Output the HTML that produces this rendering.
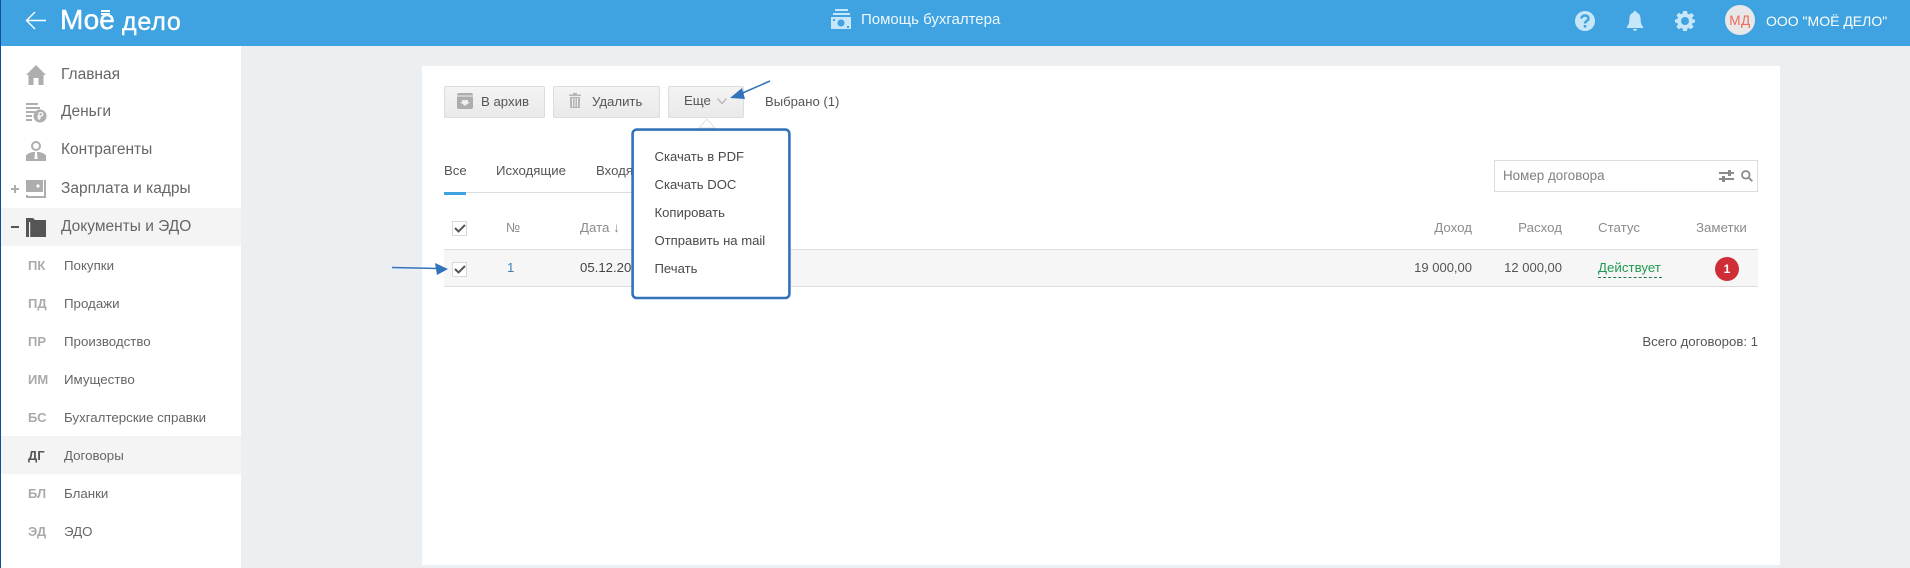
<!DOCTYPE html>
<html lang="ru"><head><meta charset="utf-8"><title>Договоры</title>
<style>
html,body{margin:0;padding:0;width:1910px;height:568px;overflow:hidden;background:#ebeff2}
body{position:relative;font-family:"Liberation Sans",sans-serif;font-size:13px;color:#555}
.a{position:absolute}
.t{position:absolute;white-space:nowrap;line-height:20px;height:20px}
.r{text-align:right}
.m{font-size:15.5px;color:#666;left:61px}
.s{font-size:13.3px;color:#666;left:64px}
.b{font-size:13px;font-weight:bold;color:#aaa;left:28px}
.h{color:#8c8c8c;font-size:13.3px}
.btn{position:absolute;top:86px;height:30px;border:1px solid #dcdcdc;border-radius:2px;background:linear-gradient(#f4f4f4,#e9e9e9)}
.cb{position:absolute;left:452px;width:13px;height:13px;border:1px solid #d8d8d8;background:#fff}
.pi{font-size:13.1px;color:#4a4a4a;left:654.500px}
svg{position:absolute;overflow:visible}
</style></head><body>
<!-- frame -->
<div class="a" style="left:1px;top:46px;width:240px;height:522px;background:#fff"></div>
<div class="a" style="left:0;top:0;width:1910px;height:46px;background:#3ea3e0"></div>
<div class="a" style="left:0;top:0;width:1px;height:568px;background:#0f4f9e"></div>
<div class="a" style="left:1px;top:208px;width:240px;height:38px;background:#f4f4f4"></div>
<div class="a" style="left:1px;top:436px;width:240px;height:38px;background:#f4f4f4"></div>
<div class="a" style="left:422px;top:66px;width:1358px;height:499px;background:#fff"></div>

<!-- header -->
<svg style="left:26px;top:12px" width="20" height="18" fill="none" stroke="#fff" stroke-width="1.400"><path d="M0 8.500H20M9 0L.5 8.500L9 17"/></svg>
<div class="t" style="left:60px;top:5px;height:30px;line-height:30px;font-size:28px;color:#fff;-webkit-text-stroke:.4px #fff">Моё</div>
<div class="a" style="left:95px;top:5px;width:22px;height:10px;background:#3ea3e0"></div>
<div class="a" style="left:101px;top:10px;width:9px;height:2px;background:#fff"></div>
<div class="a" style="left:101px;top:13px;width:9px;height:2px;background:#fff"></div>
<div class="t" style="left:122px;top:9px;height:26px;line-height:26px;font-size:25px;color:#fff;letter-spacing:.8px;-webkit-text-stroke:.4px #fff">дело</div>

<svg style="left:831px;top:9px" width="20" height="20" fill="#c8e6fa"><rect x="4" y="0" width="13" height="2"/><rect x="2" y="4" width="17" height="2"/><path fill-rule="evenodd" d="M0 8H20V20H0ZM10 10.500a3.500 3.500 0 1 0 .01 0ZM2 10v2h2v-2ZM16 17v2h2v-2Z"/></svg>
<div class="t" style="left:861px;top:10px;color:#eef8fe;font-size:15px">Помощь бухгалтера</div>

<svg style="left:1575px;top:11px" width="20" height="20"><circle cx="10" cy="10" r="10" fill="#c8e6fa"/><path d="M6.500 7.500C6.500 3.500 13.500 3.500 13.500 7.500C13.500 10 10 10 10 12.500" fill="none" stroke="#3ea3e0" stroke-width="2.400"/><rect x="8.700" y="14" width="2.600" height="2.600" fill="#3ea3e0"/></svg>
<svg style="left:1627px;top:11px" width="16" height="20" fill="#c8e6fa"><path d="M8 0C9.200 0 9.600.8 9.600 1.600C12.600 2.400 13.600 5 13.600 8C13.600 12 14.600 14 16 15.500V17H0V15.500C1.400 14 2.400 12 2.400 8C2.400 5 3.400 2.400 6.400 1.600C6.400 .8 6.800 0 8 0ZM6 18H10C10 20.500 6 20.500 6 18Z"/></svg>
<svg style="left:1675px;top:11px" width="20" height="20" fill="#c8e6fa"><path fill-rule="evenodd" d="M8 0H12L12.600 2.700L14.400 3.400L16.800 2L19 4.800L17 6.800L17.600 8.400L20 8.500V11.500L17.600 12L17 13.500L18.600 15.700L15.800 18.300L13.800 17L12.400 17.500L12 20H8L7.500 17.500L6 17L3.900 18.400L1.400 15.800L3 13.600L2.400 12L0 11.500V8.500L2.400 8L3 6.600L1.400 4.400L4 1.800L6.200 3.200L7.600 2.600ZM10 6A4 4 0 1 0 10.010 6Z"/></svg>
<div class="a" style="left:1725px;top:5px;width:30px;height:30px;border-radius:50%;background:#e8e8e8"></div>
<div class="t" style="left:1725px;top:11px;width:30px;text-align:center;color:#f0695a;font-size:13.5px;letter-spacing:.5px">МД</div>
<div class="t" style="left:1766px;top:11px;color:#fff;font-size:14px">ООО "МОЁ ДЕЛО"</div>

<!-- sidebar icons -->
<svg style="left:26px;top:65px" width="20" height="20" fill="#aeaeae"><path d="M10 0L20 10H17.500V20H12.500V13H7.500V20H2.500V10H0Z"/></svg>
<svg style="left:26px;top:103px" width="20" height="20" fill="#aeaeae"><path d="M0 0H12V2H0ZM0 4H14V6H0ZM0 8H9V10H0ZM0 12H6V14H0ZM0 16H6V18H0Z"/><circle cx="14" cy="13" r="6.500"/><path d="M13 9.500V17M11.500 13H15.500A1.700 1.700 0 0 0 15.500 9.700H13M11.500 15H15" fill="none" stroke="#fff" stroke-width="1.200"/></svg>
<svg style="left:26px;top:141px" width="20" height="20" fill="#aeaeae"><circle cx="10" cy="5" r="4" fill="none" stroke="#aeaeae" stroke-width="2"/><path d="M0 20V15C0 13 4 11.500 7 11H13C16 11.500 20 13 20 15V20Z"/><path d="M9 11H11L11.600 18H8.400Z" fill="#fff"/></svg>
<svg style="left:26px;top:180px" width="20" height="19" fill="#aeaeae"><path d="M0 0H17V12H0ZM18 0H20V18H0V15H2V16H18Z"/><circle cx="12" cy="6" r="1.600" fill="#fff"/></svg>
<div class="a" style="left:11px;top:188px;width:8px;height:2px;background:#aeaeae"></div>
<div class="a" style="left:14px;top:185px;width:2px;height:8px;background:#aeaeae"></div>
<svg style="left:26px;top:218px" width="20" height="19" fill="#555"><path d="M0 0H7L9 2H20V19H2V4H0ZM0 4H1V19H0Z"/><rect x="0" y="1" width="3" height="18" rx="1"/><rect x="3" y="4" width="1.200" height="15" fill="#f4f4f4"/></svg>
<div class="a" style="left:11px;top:226px;width:8px;height:2px;background:#555"></div>

<!-- sidebar text -->
<div class="t m" style="top:65px">Главная</div>
<div class="t m" style="top:102px">Деньги</div>
<div class="t m" style="top:140px">Контрагенты</div>
<div class="t m" style="top:179px">Зарплата и кадры</div>
<div class="t m" style="top:217px">Документы и ЭДО</div>
<div class="t b" style="top:256px">ПК</div><div class="t s" style="top:256px">Покупки</div>
<div class="t b" style="top:294px">ПД</div><div class="t s" style="top:294px">Продажи</div>
<div class="t b" style="top:332px">ПР</div><div class="t s" style="top:332px">Производство</div>
<div class="t b" style="top:370px">ИМ</div><div class="t s" style="top:370px">Имущество</div>
<div class="t b" style="top:408px">БС</div><div class="t s" style="top:408px">Бухгалтерские справки</div>
<div class="t b" style="top:446px;color:#555">ДГ</div><div class="t s" style="top:446px">Договоры</div>
<div class="t b" style="top:484px">БЛ</div><div class="t s" style="top:484px">Бланки</div>
<div class="t b" style="top:522px">ЭД</div><div class="t s" style="top:522px">ЭДО</div>

<!-- buttons -->
<div class="btn" style="left:444px;width:99px"></div>
<div class="btn" style="left:553px;width:105px"></div>
<div class="btn" style="left:668px;width:74px"></div>
<svg style="left:457px;top:93px" width="16" height="16"><rect width="16" height="16" rx="2" fill="#adadad"/><rect x="0" y="2.500" width="16" height="1" fill="#eee"/><path d="M5 7H11V9H13L8 13L3 9H5Z" fill="#eee"/></svg>
<div class="t" style="left:481px;top:92px;font-size:13.2px;color:#555">В архив</div>
<svg style="left:569px;top:93px" width="12" height="15" fill="#b5b5b5"><rect x="0" y="1.500" width="12" height="1.500"/><rect x="4" y="0" width="4" height="1.500"/><path fill-rule="evenodd" d="M1 4H11V15H1ZM3 5V14H4V5ZM5.500 5V14H6.500V5ZM8 5V14H9V5Z"/></svg>
<div class="t" style="left:592px;top:92px;font-size:13.2px;color:#555">Удалить</div>
<div class="t" style="left:684px;top:91px;font-size:13.2px;color:#555">Еще</div>
<svg style="left:717px;top:98px" width="10" height="6" fill="none" stroke="#b0b0b0" stroke-width="1.200"><path d="M.5 .5L5 5.500L9.500 .5"/></svg>
<div class="t" style="left:765px;top:92px;font-size:13.1px;color:#555">Выбрано (1)</div>

<!-- tabs -->
<div class="a" style="left:444px;top:192px;width:190px;height:1px;background:#ddd"></div>
<div class="a" style="left:444px;top:192px;width:22px;height:3px;background:#3ea3e0"></div>
<div class="t" style="left:444px;top:161px;font-size:13.2px;color:#555">Все</div>
<div class="t" style="left:496px;top:161px;font-size:13.2px;color:#555">Исходящие</div>
<div class="t" style="left:596px;top:161px;font-size:13.2px;color:#555">Входящие</div>

<!-- search -->
<div class="a" style="left:1494px;top:160px;width:262px;height:30px;border:1px solid #ddd"></div>
<div class="t" style="left:1503px;top:166px;font-size:13.4px;color:#808080">Номер договора</div>
<svg style="left:1719px;top:170px" width="15" height="12" fill="#8a8a8a"><rect y="2" width="15" height="2"/><rect y="8" width="15" height="2"/><rect x="9" y="0" width="3" height="6"/><rect x="3" y="6" width="3" height="6"/></svg>
<svg style="left:1741px;top:170px" width="12" height="12" fill="none" stroke="#8a8a8a" stroke-width="1.800"><circle cx="4.800" cy="4.800" r="3.800"/><path d="M7.500 7.500L11.300 11.300"/></svg>

<!-- table -->
<div class="a" style="left:444px;top:249px;width:1314px;height:36px;background:#f6f6f6;border-top:1px solid #ddd;border-bottom:1px solid #ddd"></div>
<div class="cb" style="top:221px"></div>
<div class="cb" style="top:262px"></div>
<svg style="left:454px;top:224px" width="12" height="9" fill="none" stroke="#555" stroke-width="2"><path d="M1 4L4.500 7.500L11 1"/></svg>
<svg style="left:454px;top:265px" width="12" height="9" fill="none" stroke="#555" stroke-width="2"><path d="M1 4L4.500 7.500L11 1"/></svg>
<div class="t h" style="left:506px;top:218px">№</div>
<div class="t h" style="left:580px;top:218px">Дата ↓</div>
<div class="t r h" style="right:438px;top:218px">Доход</div>
<div class="t r h" style="right:348px;top:218px">Расход</div>
<div class="t h" style="left:1598px;top:218px">Статус</div>
<div class="t h" style="left:1696px;top:218px">Заметки</div>
<div class="t" style="left:507px;top:258px;font-size:13.2px;color:#3a7fb5">1</div>
<div class="t" style="left:580px;top:258px;font-size:13.2px;color:#444">05.12.2018</div>
<div class="t r" style="right:438px;top:258px;font-size:13px;color:#555">19 000,00</div>
<div class="t r" style="right:348px;top:258px;font-size:13px;color:#555">12 000,00</div>
<div class="t" style="left:1598px;top:258px;font-size:13.3px;color:#1f9a52">Действует</div>
<div class="a" style="left:1598px;top:277px;width:64px;border-top:1px dashed #1f7a4a"></div>
<div class="a" style="left:1715px;top:257px;width:24px;height:24px;border-radius:50%;background:#cf2e36"></div>
<div class="t" style="left:1715px;top:259px;width:24px;text-align:center;color:#fff;font-size:12px;font-weight:bold">1</div>
<div class="t r" style="right:152px;top:332px;font-size:13.2px;color:#555">Всего договоров: 1</div>

<!-- popup -->
<svg style="left:699px;top:118px" width="16" height="10"><path d="M0 10L8 1L16 10Z" fill="#fff" stroke="#e2e2e2"/></svg>
<svg style="left:0;top:0" width="1910" height="568"><rect x="632.600" y="129.600" width="156.800" height="168.400" rx="4" fill="#fff" stroke="#3273bb" stroke-width="2.600"/></svg>
<div class="t pi" style="top:147px">Скачать в PDF</div>
<div class="t pi" style="top:175px">Скачать DOC</div>
<div class="t pi" style="top:203px">Копировать</div>
<div class="t pi" style="top:231px">Отправить на mail</div>
<div class="t pi" style="top:259px">Печать</div>

<!-- arrows -->
<svg style="left:0;top:0" width="1910" height="568" fill="#3273bb"><path d="M770 81L738 95" stroke="#3273bb" stroke-width="1.600" fill="none"/><path d="M730 98L742 88L745 99Z"/><path d="M392 267.500L438 268.500" stroke="#3273bb" stroke-width="1.600" fill="none"/><path d="M448 269L435 263L437 275Z"/></svg>
</body></html>
